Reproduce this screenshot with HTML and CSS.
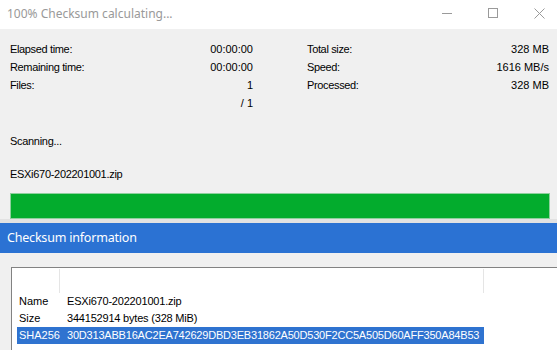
FILE: index.html
```html
<!DOCTYPE html>
<html>
<head>
<meta charset="utf-8">
<link rel="stylesheet" href="styles.css">
</head>
<body>
<div class="win">
  <div class="titlebar">
    <div class="title">100% Checksum calculating...</div>
    <div class="controls">
      <div class="ctl"><svg width="11" height="11" viewBox="0 0 11 11"><path d="M0 5.5H10" stroke="#9a9a9a" stroke-width="1"/></svg></div>
      <div class="ctl"><svg width="11" height="11" viewBox="0 0 11 11"><rect x="0.5" y="0.5" width="9" height="9" fill="none" stroke="#9a9a9a" stroke-width="1"/></svg></div>
      <div class="ctl"><svg width="11" height="11" viewBox="0 0 11 11"><path d="M0.5 0.5L10.5 10.5M10.5 0.5L0.5 10.5" stroke="#9a9a9a" stroke-width="1"/></svg></div>
    </div>
  </div>
  <div class="body">
    <div class="stats">
      <div class="col">
        <div class="row"><span class="lbl">Elapsed time:</span><span class="val">00:00:00</span></div>
        <div class="row"><span class="lbl">Remaining time:</span><span class="val">00:00:00</span></div>
        <div class="row"><span class="lbl">Files:</span><span class="val">1</span></div>
        <div class="row"><span class="lbl"></span><span class="val">/ 1</span></div>
      </div>
      <div class="col">
        <div class="row"><span class="lbl">Total size:</span><span class="val">328 MB</span></div>
        <div class="row"><span class="lbl">Speed:</span><span class="val">1616 MB/s</span></div>
        <div class="row"><span class="lbl">Processed:</span><span class="val">328 MB</span></div>
      </div>
    </div>
    <div class="status">Scanning...</div>
    <div class="file">ESXi670-202201001.zip</div>
    <div class="progress"><div class="fill"></div></div>
  </div>
  <div class="strip"></div>
</div>
<div class="dialog">
  <div class="dlg-title">Checksum information</div>
  <div class="dlg-body">
    <div class="list">
      <div class="header">
        <div class="hcol c1"></div>
        <div class="hcol c2"></div>
      </div>
      <div class="item"><span class="k">Name</span><span class="v">ESXi670-202201001.zip</span></div>
      <div class="item"><span class="k">Size</span><span class="v">344152914 bytes (328 MiB)</span></div>
      <div class="item sel"><span class="k">SHA256</span><span class="v">30D313ABB16AC2EA742629DBD3EB31862A50D530F2CC5A505D60AFF350A84B53</span></div>
    </div>
  </div>
</div>
</body>
</html>
```

FILE: styles.css
```css
* { box-sizing: border-box; }
html, body { margin: 0; padding: 0; }
body {
  width: 557px;
  height: 350px;
  overflow: hidden;
  background: #f0f0f0;
  font-family: "Liberation Sans", Arial, sans-serif;
  font-size: 11px;
  color: #000;
}
.win { background: #f0f0f0; }
.titlebar {
  height: 29px;
  background: #fff;
  display: flex;
  align-items: center;
  overflow: hidden;
}
.title {
  flex: 1;
  padding-left: 7px;
  font-family: "Noto Sans", sans-serif;
  font-size: 12px;
  color: #999;
  padding-bottom: 2px;
}
.controls {
  display: flex;
  flex-shrink: 0;
  margin-right: -5px;
}
.ctl {
  width: 46px;
  height: 29px;
  display: flex;
  align-items: center;
  justify-content: center;
  padding-bottom: 3px;
}
.body { padding: 11px 7px 0 10px; }
.stats {
  display: grid;
  grid-template-columns: 243px 242px;
  column-gap: 54px;
}
.row {
  display: flex;
  justify-content: space-between;
  height: 18px;
  line-height: 18px;
}
.lbl { letter-spacing: -0.35px; }
.status { margin-top: 20px; line-height: 18px; letter-spacing: -0.3px; }
.file { margin-top: 15px; line-height: 18px; letter-spacing: -0.3px; }
.progress {
  margin-top: 10px;
  width: 540px;
  height: 26px;
  border: 1px solid #8fd09e;
  background: #e6e6e6;
}
.fill { height: 100%; width: 100%; background: #03ac2d; }
.strip { height: 4px; background: #e2e2e2; }
.dialog { background: #f0f0f0; }
.dlg-title {
  height: 30px;
  background: #2b72d3;
  color: #fff;
  font-family: "Noto Sans", sans-serif;
  font-size: 12.5px;
  letter-spacing: -0.2px;
  line-height: 30px;
  padding-left: 7px;
}
.dlg-body { padding: 14px 0 0 11px; }
.list {
  background: #fff;
  border-top: 1px solid #828282;
  border-left: 1px solid #828282;
  width: 546px;
  height: 84px;
  overflow: hidden;
}
.header { display: flex; height: 25px; padding-top: 1px; }
.hcol { height: 24px; border-right: 1px solid #e5e5e5; }
.c1 { width: 48px; }
.c2 { width: 424px; }
.item {
  display: flex;
  height: 17px;
  line-height: 17px;
  margin-left: 5px;
  width: 467px;
  white-space: nowrap;
}
.k { width: 43px; padding-left: 2px; }
.v { padding-left: 7px; letter-spacing: -0.2px; }
.sel { background: #2f73d0; color: #fff; }
```
